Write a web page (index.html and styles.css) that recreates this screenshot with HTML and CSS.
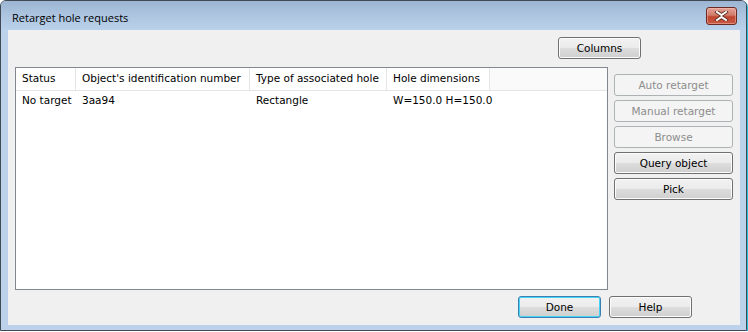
FILE: index.html
```html
<!DOCTYPE html>
<html lang="en">
<head>
    <meta charset="UTF-8">
    <title>Retarget hole requests</title>
    <link rel="stylesheet" href="styles.css">
</head>
<body>
    <div class="window">
        <div class="titlebar">
            <span class="title">Retarget hole requests</span>
            <button class="close" title="Close">
                <svg width="15" height="10" viewBox="0 0 15 10">
                    <path d="M3 1 L7.5 4 L12 1 M3 9 L7.5 6 L12 9" fill="none" stroke="#5a2a20" stroke-width="3.6" stroke-linecap="square"/>
                    <path d="M3 1 L7.5 4 L12 1 M3 9 L7.5 6 L12 9" fill="none" stroke="#ffffff" stroke-width="2" stroke-linecap="square"/>
                </svg>
            </button>
        </div>
        <div class="client">
            <div class="top-row">
                <button class="btn columns-btn">Columns</button>
            </div>
            <div class="middle">
                <div class="list">
                    <div class="list-header">
                        <div class="col">Status</div>
                        <div class="col">Object's identification number</div>
                        <div class="col">Type of associated hole</div>
                        <div class="col">Hole dimensions</div>
                        <div class="col filler"></div>
                    </div>
                    <div class="list-row">
                        <div class="cell">No target</div>
                        <div class="cell">3aa94</div>
                        <div class="cell">Rectangle</div>
                        <div class="cell">W=150.0 H=150.0</div>
                        <div class="cell"></div>
                    </div>
                </div>
                <div class="side">
                    <button class="btn" disabled>Auto retarget</button>
                    <button class="btn" disabled>Manual retarget</button>
                    <button class="btn" disabled>Browse</button>
                    <button class="btn">Query object</button>
                    <button class="btn">Pick</button>
                </div>
            </div>
            <div class="bottom-row">
                <button class="btn default">Done</button>
                <button class="btn">Help</button>
            </div>
        </div>
    </div>
</body>
</html>
```

FILE: styles.css
```css
body {
    margin: 0;
    background-color: #ffffff;
    font-family: "DejaVu Sans", Verdana, sans-serif;
    font-size: 10.5px;
    color: #000000;
}
.window {
    width: 747px;
    height: 331px;
    box-sizing: border-box;
    border: 1px solid #404a55;
    border-radius: 6px 6px 0 0;
    background-color: #bcd2ea;
    padding: 0 6px 5px 7px;
    display: flex;
    flex-direction: column;
    box-shadow: 1px 1px 0 #2cc2da;
}
.titlebar {
    height: 29px;
    margin: 0 -6px 0 -7px;
    padding: 0 9px 0 11px;
    border-radius: 5px 5px 0 0;
    background: linear-gradient(to bottom, #9cb5d2, #adc5e0 50%, #bad1eb);
    display: flex;
    align-items: center;
    justify-content: space-between;
}
.title {
    font-family: "Open Sans", "Liberation Sans", sans-serif;
    font-size: 11px;
    color: #000000;
    margin-top: 4px;
}
.close {
    width: 31px;
    height: 18px;
    margin-top: 1px;
    padding: 0;
    border: 1px solid #6b2a22;
    border-radius: 3px;
    background: linear-gradient(to bottom, #e2a397, #d17a69 45%, #c0452f 55%, #c85a44);
    box-shadow: inset 0 0 0 1px rgba(255, 200, 190, 0.45);
    display: flex;
    align-items: center;
    justify-content: center;
}
.client {
    flex: 1;
    background-color: #f0f0f0;
    padding: 7px;
    display: flex;
    flex-direction: column;
}
.top-row {
    display: flex;
    justify-content: flex-end;
    padding-right: 92px;
}
.btn {
    font-family: "DejaVu Sans", Verdana, sans-serif;
    font-size: 10.5px;
    font-weight: normal;
    color: #000000;
    height: 22px;
    padding: 0;
    border: 1px solid #707070;
    border-radius: 3px;
    background: linear-gradient(to bottom, #f2f2f2, #ebebeb 50%, #dddddd 50%, #cfcfcf);
    box-shadow: inset 0 0 0 1px #fcfcfc;
}
.btn:disabled {
    color: #8d8d8d;
    border-color: #adb2b5;
    background: #f4f4f4;
    box-shadow: none;
}
.btn.default {
    border-color: #3c7fb1;
    box-shadow: inset 0 0 0 1px #48d4f6;
}
.columns-btn {
    width: 83px;
}
.middle {
    display: flex;
    margin-top: 8px;
}
.list {
    width: 594px;
    height: 223px;
    box-sizing: border-box;
    border: 1px solid #828790;
    background-color: #ffffff;
}
.list-header,
.list-row {
    display: grid;
    grid-template-columns: 60px 174px 137px 103px 1fr;
}
.list-header {
    height: 22px;
    border-bottom: 1px solid #e5e5e5;
}
.col {
    padding-left: 6px;
    line-height: 21px;
    border-right: 1px solid #e5e5e5;
    white-space: nowrap;
}
.col.filler {
    border-right: none;
    background-color: #fafafa;
}
.list-row {
    height: 18px;
    line-height: 19px;
}
.cell {
    padding-left: 6px;
    white-space: nowrap;
}
.side {
    display: flex;
    flex-direction: column;
    gap: 4px;
    margin-left: 6px;
    padding-top: 7px;
}
.side .btn {
    width: 119px;
}
.bottom-row {
    display: flex;
    gap: 8px;
    margin-top: 6px;
    padding-left: 503px;
}
.bottom-row .btn {
    width: 83px;
}
```
